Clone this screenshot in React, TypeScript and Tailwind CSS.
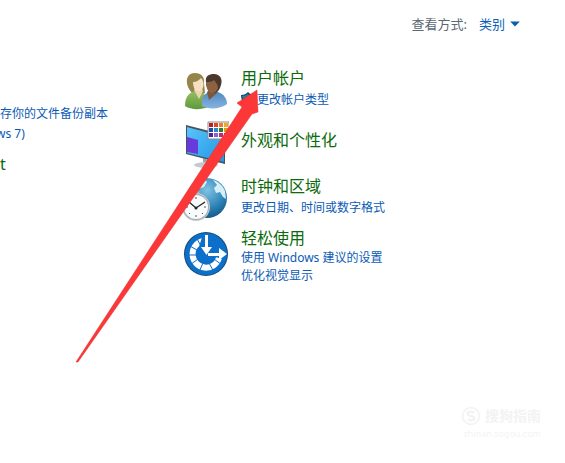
import type { ReactNode } from "react";

const swatches = [
  "#b3202c", "#e0442a", "#f07c22", "#f5a623",
  "#1d4fa3", "#2f86c9", "#2f7d32", "#d69c1c",
  "#4527a0", "#8a63c9", "#b0307c", "#c62828",
];

function UsersIcon() {
  return (
    <svg viewBox="0 0 48 48" className="size-12" aria-hidden="true">
      <defs>
        <linearGradient id="green" x1="0" y1="0" x2="0" y2="1">
          <stop offset="0" stopColor="#94bf62" />
          <stop offset="1" stopColor="#5e9a3c" />
        </linearGradient>
        <linearGradient id="blueShirt" x1="0" y1="0" x2="0" y2="1">
          <stop offset="0" stopColor="#5288bf" />
          <stop offset="1" stopColor="#86b4e2" />
        </linearGradient>
      </defs>
      <path d="M7 20C4 12 7 6 14 6c6 0 10 4 9 10l1 10-9 2c-4-1-6-4-8-8z" fill="#94854a" />
      <path d="M4 39c0-8 3-13 10-15l9 2 4 14c-7 3-17 3-23-1z" fill="url(#green)" />
      <path d="M13 23l5 9 4-8-2-5h-5z" fill="#efd3b0" />
      <path d="M12 15c4 0 6-2 8-4 4 3 3 12-1 13-5 1-7-4-7-9z" fill="#f6dfc2" />
      <path d="M21 39c-1-8 2-13 8-14h8c6 2 9 7 9 12-6 5-18 6-25 2z" fill="url(#blueShirt)" />
      <path d="M26 25l2 8 8-7-1-4-7 1z" fill="#7d573b" />
      <path d="M25 15c-1-6 3-8 8-8 6 0 9 5 7 11-1 4-3 7-6 8-5 0-9-5-9-11z" fill="#4a382c" />
      <path d="M25 15c3 0 6 0 8-2 2 3 4 4 4 8-1 3-3 5-6 5-4 0-6-5-6-11z" fill="#8c6243" />
    </svg>
  );
}

function DisplayIcon() {
  return (
    <svg viewBox="0 0 48 48" className="size-12" aria-hidden="true">
      <defs>
        <linearGradient id="screen" x1="0" y1="0" x2="1" y2="1">
          <stop offset="0" stopColor="#5ac4fa" />
          <stop offset="1" stopColor="#2196e6" />
        </linearGradient>
      </defs>
      <path d="M22 37l8 3 1 5-9-1z" fill="#9aa4ab" />
      <ellipse cx="25" cy="44" rx="12" ry="3" fill="#c3cbd0" />
      <path d="M5 4l39 10v29L5 33z" fill="#46545f" />
      <path d="M6 6l37 10v25L6 32z" fill="url(#screen)" />
      <path d="M6 16l11 3v14L6 31z" fill="#6939dc" />
      <path d="M27 1h21v17H27z" fill="#fff" stroke="#8a8a8a" />
      {swatches.map((color, i) => (
        <rect key={color} x={28 + (i % 4) * 5} y={2 + Math.floor(i / 4) * 5} width="4" height="4" fill={color} />
      ))}
    </svg>
  );
}

function ClockIcon() {
  return (
    <svg viewBox="0 0 48 48" className="size-12" aria-hidden="true">
      <defs>
        <radialGradient id="globe" cx="0.5" cy="0.3" r="0.7">
          <stop offset="0" stopColor="#7fc3e2" />
          <stop offset="0.6" stopColor="#3287ba" />
          <stop offset="1" stopColor="#155b8c" />
        </radialGradient>
      </defs>
      <circle cx="26" cy="22" r="20" fill="url(#globe)" />
      <path d="M9 13c4-6 9-9 14-10l3 3-3 5-6 2-3 6-4 1zM32 4c6 2 10 6 12 11l1 8-3-2-3-5-4 1-2-5 3-3z" fill="#d8eef6" />
      <path d="M13 18l-1-3h6l1 3z" fill="#a8aeb2" />
      <circle cx="15" cy="31" r="14" fill="#c4cacf" />
      <circle cx="15" cy="31" r="13" fill="#a4abb0" />
      <circle cx="15" cy="31" r="12" fill="#f8fafb" />
      <path d="M15 21v2M15 39v2M5 31h2M23 31h2M8 24l1 1M21 37l1 1M8 38l1-1" stroke="#555" />
      <path d="M8 26l7 6 9-6" fill="none" stroke="#222" strokeWidth="1.3" />
      <circle cx="15" cy="32" r="1.500" fill="#222" />
    </svg>
  );
}

function EaseIcon() {
  return (
    <svg viewBox="0 0 48 48" className="size-12" aria-hidden="true">
      <circle cx="25" cy="24" r="22" fill="#174b7c" />
      <circle cx="25" cy="24" r="21" fill="#0c6fc9" />
      <path d="M22 11a13.500 13.500 0 1 0 16 17" fill="none" stroke="#fff" strokeWidth="6" />
      <path d="M15 7l5 9M7 15l9 5M6 25h10M9 35l8-6M18 42l4-9M33 42l-5-9M41 35l-8-6" stroke="#0c6fc9" />
      <path d="M22 4h6v11h5v5l-7 9h-2l-7-9z" fill="#0c6fc9" />
      <path d="M24 5h3v12h4l-5.500 8-5.500-8h4z" fill="#fff" />
      <path d="M27 23h11v-5l8 6-8 6v-4H27z" fill="#fff" />
    </svg>
  );
}

function ShieldIcon() {
  return (
    <svg viewBox="0 0 16 16" className="size-4 shrink-0" aria-hidden="true">
      <path d="M0 3c3 0 5-1 7-3 2 2 4 3 6 3 0 6-2 9-6 11C3 12 0 9 0 3z" fill="#145176" />
      <path d="M7 3v10c3-2 4-4 4-8-2 0-3-1-4-2z" fill="#e3bd44" />
      <path d="M1 4c3 0 4-1 6-2v5H2z" fill="#277e9e" />
    </svg>
  );
}

type CategoryProps = {
  icon: ReactNode;
  title: string;
  children?: ReactNode;
  className?: string;
  iconClassName?: string;
  textClassName?: string;
};

function Category({ icon, title, children, className = "", iconClassName = "", textClassName = "" }: CategoryProps) {
  return (
    <section className={`flex gap-3 ${className}`}>
      <div className={`shrink-0 ${iconClassName}`}>{icon}</div>
      <div className={`flex flex-col items-start text-xs whitespace-nowrap text-[#0b5bb5] ${textClassName}`}>
        <h2 className="text-base leading-6 text-[#0b6b0b]">
          <a href="#">{title}</a>
        </h2>
        {children}
      </div>
    </section>
  );
}

export default function App() {
  return (
    <div className="relative overflow-hidden bg-white pb-4 font-['Noto_Sans','Noto_Sans_CJK_SC',sans-serif]">
      <header className="flex items-center justify-end gap-3 pt-3 pr-11 text-[13px] leading-6">
        <span className="text-[#5b6675]">查看方式:</span>
        <button type="button" className="flex items-center gap-1 text-[#0b62b8]">
          类别
          <svg viewBox="0 0 10 6" className="h-2 w-3" aria-hidden="true">
            <path d="M1 1h8L5 5z" fill="#0b5fae" />
          </svg>
        </button>
      </header>

      <main className="flex pt-[30px]">
        <nav className="flex w-[181px] shrink-0 flex-col items-start pt-[38px] text-xs leading-5 text-[#0b5bb5]">
          <a href="#" className="whitespace-nowrap">存你的文件备份副本</a>
          <a href="#" className="-ml-1">ws 7)</a>
          <a href="#" className="mt-2 text-base leading-6 text-[#0b6b0b]">t</a>
        </nav>

        <div className="flex flex-col">
          <Category className="h-12" icon={<UsersIcon />} iconClassName="pt-px" title="用户帐户">
            <a href="#" className="flex items-center leading-5">
              <ShieldIcon />
              更改帐户类型
            </a>
          </Category>
          <Category
            className="h-[60px]"
            icon={<DisplayIcon />}
            iconClassName="pt-[7px]"
            textClassName="pt-[14px]"
            title="外观和个性化"
          />
          <Category className="h-[52px]" icon={<ClockIcon />} iconClassName="pt-0.5" title="时钟和区域">
            <a href="#" className="leading-5">更改日期、时间或数字格式</a>
          </Category>
          <Category icon={<EaseIcon />} iconClassName="pt-1" title="轻松使用">
            <a href="#" className="leading-4">使用 Windows 建议的设置</a>
            <a href="#" className="leading-5">优化视觉显示</a>
          </Category>
        </div>
      </main>

      <footer className="mt-[118px] flex flex-col items-end pr-6 text-[#f3f3f3]">
        <div className="flex items-center gap-1">
          <svg viewBox="0 0 24 24" className="size-5" aria-hidden="true">
            <circle cx="12" cy="12" r="10" fill="none" stroke="currentColor" strokeWidth="2" />
            <path d="M16 8c-3-2-8-1-8 1 0 4 8 2 8 6 0 2-5 3-8 1" fill="none" stroke="currentColor" strokeWidth="3" />
          </svg>
          <span className="text-sm leading-6 font-bold">搜狗指南</span>
        </div>
        <span className="text-[9px] leading-3">zhinan.sogou.com</span>
      </footer>

      <svg viewBox="0 0 184 274" className="pointer-events-none absolute top-[89px] left-[76px] h-[274px] w-[184px]" aria-hidden="true">
        <path d="M181 1L161 14L166 18L0 273L2 273L176 25L182 23Z" fill="#fb3737" stroke="#e62e35" strokeWidth="0.500" />
      </svg>
    </div>
  );
}
